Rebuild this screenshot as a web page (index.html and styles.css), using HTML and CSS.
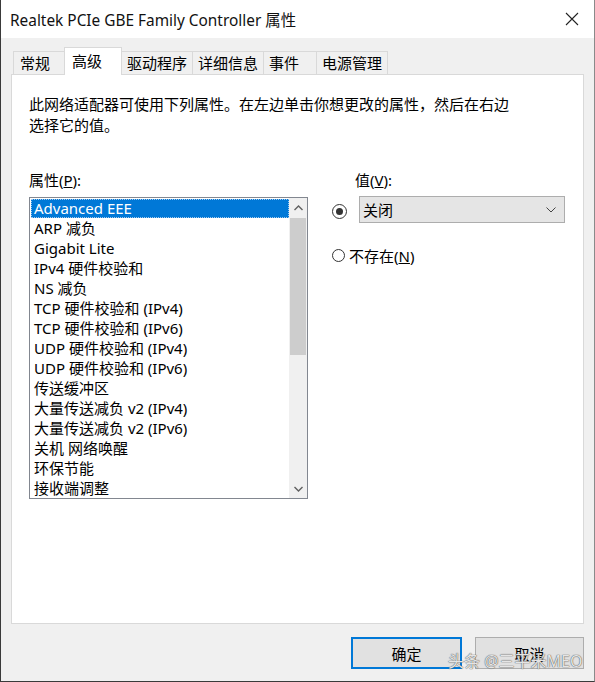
FILE: index.html
```html
<!DOCTYPE html>
<html lang="zh-CN">
<head>
  <meta charset="UTF-8">
  <title>Realtek PCIe GBE Family Controller 属性</title>
  <link rel="stylesheet" href="styles.css">
</head>
<body>
  <div class="window">
    <div class="titlebar">
      <span class="title">Realtek PCIe GBE Family Controller 属性</span>
      <svg class="close" width="14" height="14" viewBox="0 0 14 14">
        <path d="M1 1 L13 13 M13 1 L1 13" stroke="#222" stroke-width="1.1" fill="none"/>
      </svg>
    </div>

    <div class="main">
      <div class="tabs">
        <div class="tab first">常规</div>
        <div class="tab active">高级</div>
        <div class="tab">驱动程序</div>
        <div class="tab">详细信息</div>
        <div class="tab">事件</div>
        <div class="tab">电源管理</div>
      </div>

      <div class="panel">
        <p class="desc">此网络适配器可使用下列属性。在左边单击你想更改的属性，然后在右边<br>选择它的值。</p>

        <div class="columns">
          <div class="left">
            <div class="label">属性(<u>P</u>):</div>
            <div class="listbox">
              <div class="items">
                <div class="item selected">Advanced EEE</div>
                <div class="item">ARP 减负</div>
                <div class="item">Gigabit Lite</div>
                <div class="item">IPv4 硬件校验和</div>
                <div class="item">NS 减负</div>
                <div class="item">TCP 硬件校验和 (IPv4)</div>
                <div class="item">TCP 硬件校验和 (IPv6)</div>
                <div class="item">UDP 硬件校验和 (IPv4)</div>
                <div class="item">UDP 硬件校验和 (IPv6)</div>
                <div class="item">传送缓冲区</div>
                <div class="item">大量传送减负 v2 (IPv4)</div>
                <div class="item">大量传送减负 v2 (IPv6)</div>
                <div class="item">关机 网络唤醒</div>
                <div class="item">环保节能</div>
                <div class="item">接收端调整</div>
              </div>
              <div class="scrollbar">
                <div class="arrow">
                  <svg width="9" height="6" viewBox="0 0 9 6"><path d="M0.5 5 L4.5 1 L8.5 5" stroke="#606060" stroke-width="1.4" fill="none"/></svg>
                </div>
                <div class="thumb"></div>
                <div class="track"></div>
                <div class="arrow">
                  <svg width="9" height="6" viewBox="0 0 9 6"><path d="M0.5 1 L4.5 5 L8.5 1" stroke="#606060" stroke-width="1.4" fill="none"/></svg>
                </div>
              </div>
            </div>
          </div>

          <div class="right">
            <div class="label value-label">值(<u>V</u>):</div>
            <div class="value-row">
              <span class="radio checked"></span>
              <div class="select">
                <span>关闭</span>
                <svg width="10" height="6" viewBox="0 0 10 6"><path d="M0.5 0.5 L5 5 L9.5 0.5" stroke="#444" stroke-width="1" fill="none"/></svg>
              </div>
            </div>
            <div class="none-row">
              <span class="radio"></span>
              <span>不存在(<u>N</u>)</span>
            </div>
          </div>
        </div>
      </div>

      <div class="buttons">
        <div class="btn default">确定</div>
        <div class="btn">取消</div>
      </div>
    </div>

    <div class="watermark">头条 @三平米MEO</div>
  </div>
</body>
</html>
```

FILE: styles.css
```css
body {
  margin: 0;
  font-family: 'Noto Sans', 'Noto Sans CJK SC', sans-serif;
  font-size: 15px;
  color: #000;
}

.window {
  position: relative;
  width: 595px;
  height: 682px;
  box-sizing: border-box;
  background: #f0f0f0;
  border-left: 1px solid #3a3a3a;
  border-right: 1px solid #8a8a8a;
  border-bottom: 1px solid #3a3a3a;
  overflow: hidden;
}

.titlebar {
  height: 38px;
  background: #fff;
  display: flex;
  align-items: center;
  justify-content: space-between;
  padding: 0 15px 0 9px;
}

.title {
  font-size: 15.4px;
  color: #111;
}

.main {
  padding: 9px 10px 0 10px;
}

.tabs {
  display: flex;
  align-items: flex-end;
  height: 27px;
  padding-left: 2px;
  position: relative;
  z-index: 2;
}

.tab {
  height: 23px;
  line-height: 23px;
  padding: 0 5px;
  min-width: 54px;
  border: 1px solid #d9d9d9;
  border-bottom: none;
  margin-left: -1px;
  background: #f0f0f0;
  box-sizing: border-box;
}

.tab.first {
  min-width: 0;
  width: 52px;
  margin-left: 0;
  padding-left: 6px;
}

.tab.active {
  height: 28px;
  line-height: 26px;
  background: #fff;
  margin-bottom: -1px;
  width: 58px;
  padding-left: 7px;
  position: relative;
}

.panel {
  height: 550px;
  box-sizing: border-box;
  background: #fff;
  border: 1px solid #d9d9d9;
  padding: 19px 17px 0 17px;
  width: 573px;
}

.desc {
  margin: 0;
  line-height: 21px;
}

.columns {
  display: flex;
  margin-top: 34px;
}

.left {
  width: 279px;
}

.label {
  line-height: 21px;
  height: 21px;
  margin-bottom: 6px;
}

.listbox {
  display: flex;
  height: 302px;
  box-sizing: border-box;
  border: 1px solid #828790;
  padding: 1px;
}

.items {
  flex: 1;
}

.item {
  height: 20px;
  line-height: 19px;
  padding-left: 3px;
  white-space: nowrap;
}

.item.selected {
  background: #0078d7;
  color: #fff;
  outline: 1px dotted #9fc8ee;
  outline-offset: -1px;
  height: 19px;
  margin-bottom: 1px;
}

.scrollbar {
  width: 18px;
  margin: -1px -1px -1px 0;
  background: #f0f0f0;
  display: flex;
  flex-direction: column;
}

.arrow {
  height: 19px;
  display: flex;
  align-items: center;
  justify-content: center;
}

.thumb {
  height: 137px;
  margin: 1px 1px 0 1px;
  background: #cdcdcd;
}

.track {
  flex: 1;
}

.right {
  padding-left: 24px;
  flex: 1;
}

.value-label {
  padding-left: 23px;
}

.value-row {
  display: flex;
  align-items: center;
  height: 27px;
  margin-top: -1px;
}

.radio {
  width: 13px;
  height: 13px;
  border: 1px solid #333;
  border-radius: 50%;
  box-sizing: border-box;
  display: inline-block;
  position: relative;
  flex: none;
}

.radio.checked {
  width: 15px;
  height: 15px;
  margin-top: 4px;
}

.radio.checked::after {
  content: "";
  position: absolute;
  left: 3px;
  top: 3px;
  width: 7px;
  height: 7px;
  border-radius: 50%;
  background: #333;
}

.select {
  margin-left: 12px;
  width: 206px;
  height: 27px;
  box-sizing: border-box;
  background: #e5e5e5;
  border: 1px solid #adadad;
  display: flex;
  align-items: center;
  justify-content: space-between;
  padding: 0 8px 0 3px;
}

.none-row {
  display: flex;
  align-items: center;
  gap: 4px;
  margin-top: 22px;
}

.buttons {
  display: flex;
  justify-content: flex-end;
  gap: 13px;
  margin-top: 13px;
  width: 573px;
}

.btn {
  width: 109px;
  height: 32px;
  box-sizing: border-box;
  border: 1px solid #adadad;
  background: #e1e1e1;
  display: flex;
  align-items: center;
  justify-content: center;
}

.btn.default {
  width: 111px;
  border: 2px solid #0078d7;
}

.watermark {
  position: absolute;
  left: 447px;
  top: 648px;
  font-size: 16px;
  color: rgba(255, 255, 255, 0.85);
  text-shadow: 0 0 1px #555, 0 0 1px #555;
  white-space: nowrap;
}
```
